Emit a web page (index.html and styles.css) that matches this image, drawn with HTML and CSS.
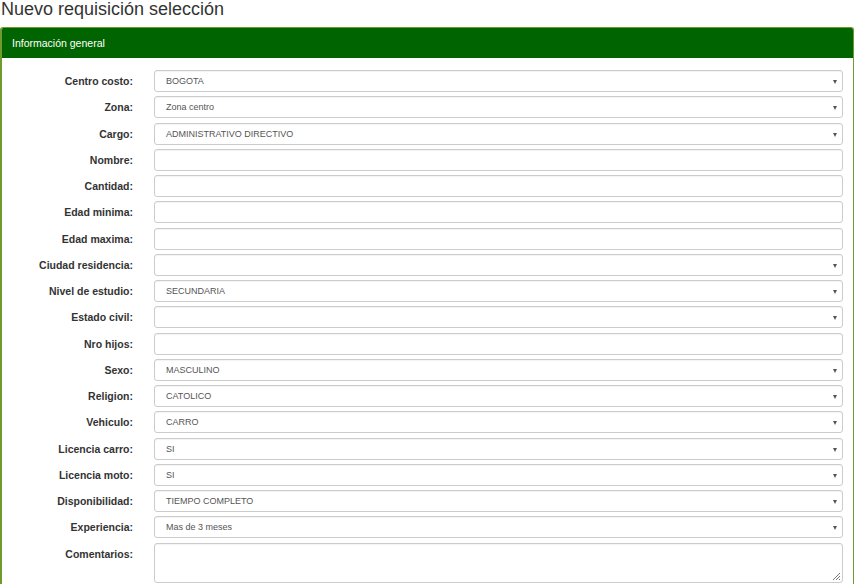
FILE: index.html
```html
<!DOCTYPE html>
<html lang="es">
<head>
<meta charset="utf-8">
<title>Nuevo requisición selección</title>
<link rel="stylesheet" href="styles.css">
</head>
<body>
<h1 class="page-title">Nuevo requisición selección</h1>
<div class="panel">
  <div class="panel-heading">Información general</div>
  <form class="panel-body">
    <label class="lbl">Centro costo:</label>
    <div class="field select"><span>BOGOTA</span></div>
    <label class="lbl">Zona:</label>
    <div class="field select"><span>Zona centro</span></div>
    <label class="lbl">Cargo:</label>
    <div class="field select"><span>ADMINISTRATIVO DIRECTIVO</span></div>
    <label class="lbl">Nombre:</label>
    <div class="field"></div>
    <label class="lbl">Cantidad:</label>
    <div class="field"></div>
    <label class="lbl">Edad minima:</label>
    <div class="field"></div>
    <label class="lbl">Edad maxima:</label>
    <div class="field"></div>
    <label class="lbl">Ciudad residencia:</label>
    <div class="field select"></div>
    <label class="lbl">Nivel de estudio:</label>
    <div class="field select"><span>SECUNDARIA</span></div>
    <label class="lbl">Estado civil:</label>
    <div class="field select"></div>
    <label class="lbl">Nro hijos:</label>
    <div class="field"></div>
    <label class="lbl">Sexo:</label>
    <div class="field select"><span>MASCULINO</span></div>
    <label class="lbl">Religion:</label>
    <div class="field select"><span>CATOLICO</span></div>
    <label class="lbl">Vehiculo:</label>
    <div class="field select"><span>CARRO</span></div>
    <label class="lbl">Licencia carro:</label>
    <div class="field select"><span>SI</span></div>
    <label class="lbl">Licencia moto:</label>
    <div class="field select"><span>SI</span></div>
    <label class="lbl">Disponibilidad:</label>
    <div class="field select"><span>TIEMPO COMPLETO</span></div>
    <label class="lbl">Experiencia:</label>
    <div class="field select"><span>Mas de 3 meses</span></div>
    <label class="lbl lbl-top">Comentarios:</label>
    <div class="field textarea">
      <svg class="grip" width="9" height="9" viewBox="0 0 9 9"><path d="M8 1 L1 8 M8 4 L4 8 M8 7 L7 8" stroke="#777" stroke-width="1" fill="none"/></svg>
    </div>
  </form>
</div>
</body>
</html>
```

FILE: styles.css
```css
html, body {
  margin: 0;
  padding: 0;
  background: #fff;
  font-family: "Liberation Sans", Arial, sans-serif;
  color: #333;
  overflow: hidden;
}
.page-title {
  margin: 0;
  padding: 0 0 0 1px;
  height: 27px;
  line-height: 18px;
  font-size: 18px;
  font-weight: normal;
  color: #333;
}
.panel {
  margin-right: 2px;
  border: 1px solid #6f9a2e;
  border-left-width: 2px;
  border-bottom: 0;
  border-radius: 3px 3px 0 0;
  overflow: hidden;
  height: calc(100vh - 28px);
}
.panel-heading {
  background: #006400;
  color: #fff;
  height: 30px;
  line-height: 30px;
  padding-left: 10px;
  font-size: 10.5px;
}
.panel-body {
  display: grid;
  grid-template-columns: 131px 689px;
  column-gap: 21px;
  row-gap: 4.25px;
  padding-top: 12px;
  margin: 0;
}
.lbl {
  font-size: 10.5px;
  font-weight: bold;
  text-align: right;
  line-height: 22px;
  color: #333;
}
.lbl-top {
  align-self: start;
}
.field {
  position: relative;
  height: 20px;
  border: 1px solid #ccc;
  border-radius: 3px;
  box-shadow: inset 0 1px 1px rgba(0,0,0,0.05);
  font-size: 9px;
  line-height: 20px;
  color: #555;
  padding-left: 11px;
}
.select::after {
  content: "";
  position: absolute;
  right: 5px;
  top: 9px;
  border-left: 2.5px solid transparent;
  border-right: 2.5px solid transparent;
  border-top: 4px solid #555;
}
.textarea {
  height: 38px;
}
.grip {
  position: absolute;
  right: 1px;
  bottom: 1px;
}
```
